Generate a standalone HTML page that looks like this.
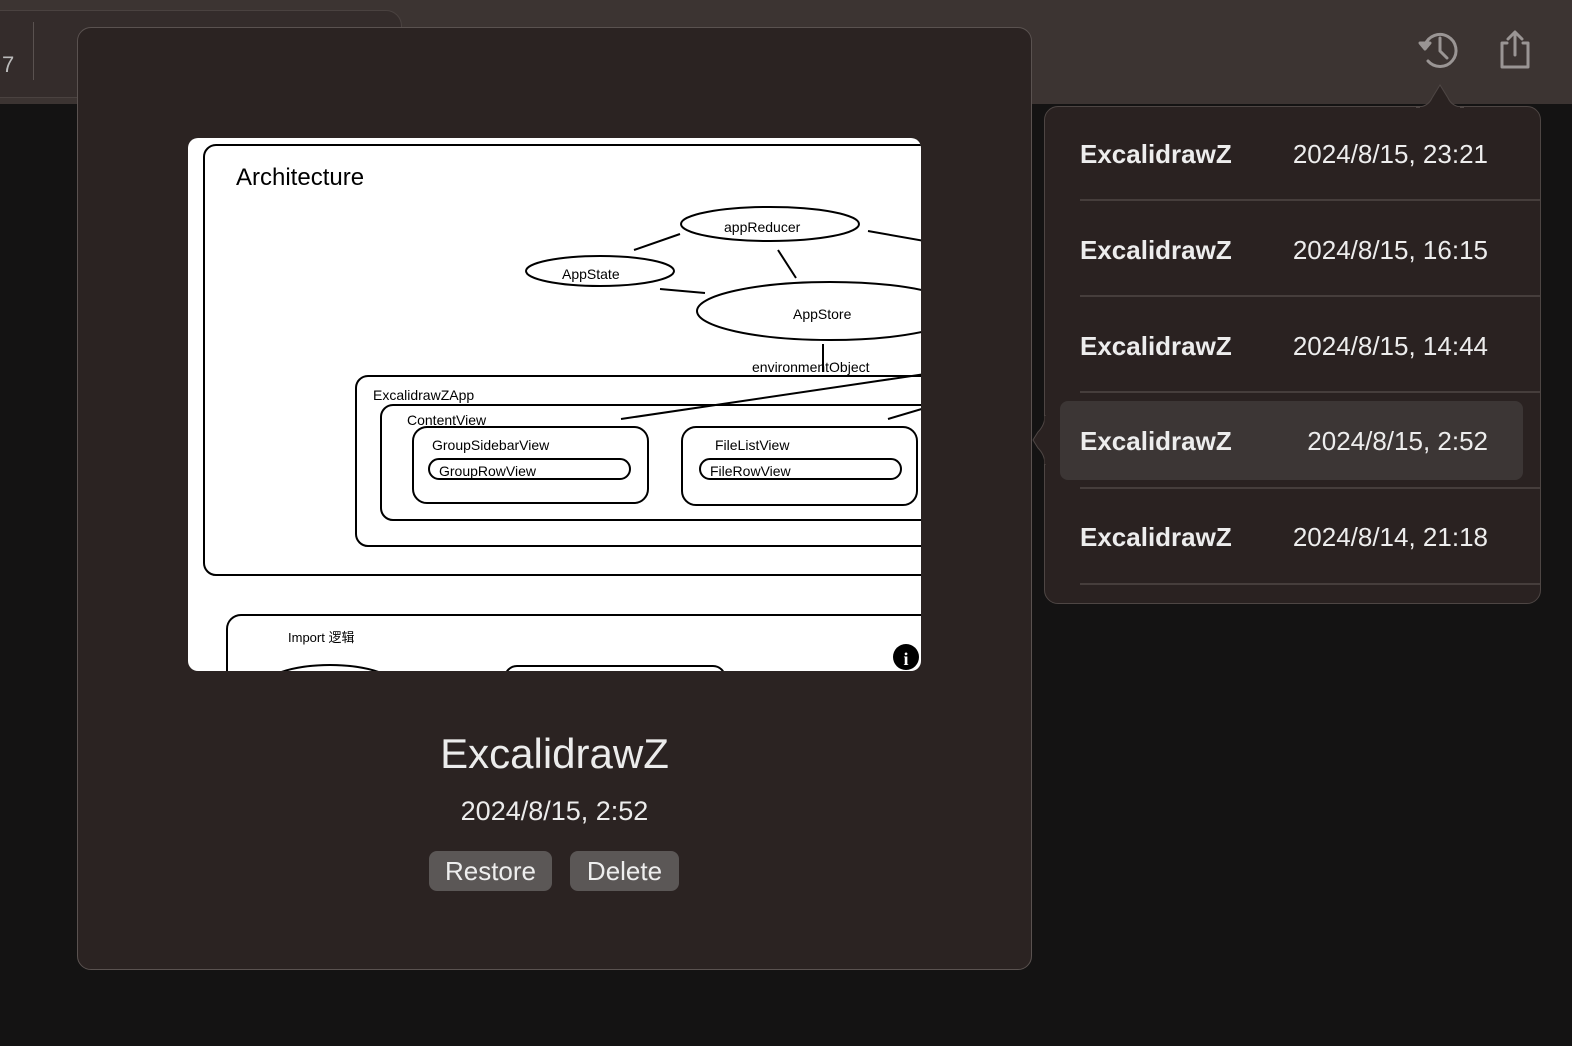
<!DOCTYPE html>
<html><head><meta charset="utf-8"><style>
body{margin:0;width:1572px;height:1046px;background:#141313;position:relative;overflow:hidden;font-family:"Liberation Sans","Noto Sans CJK SC",sans-serif;}
.top{position:absolute;left:0;top:0;width:1572px;height:104px;background:#3c3432;}
.tab{position:absolute;left:-20px;top:10px;width:420px;height:86px;background:#342c2b;border:1px solid #4a4240;border-radius:16px;}
.main{position:absolute;left:77px;top:27px;width:955px;height:943px;background:#2b2322;border:1px solid #5a5250;border-radius:14px;box-sizing:border-box;}
.pop{position:absolute;left:1044px;top:106px;width:497px;height:498px;background:#2a2221;border:1px solid #4e4644;border-radius:14px;box-sizing:border-box;}
.row{position:absolute;left:1080px;width:408px;height:40px;color:#ededed;font-size:26px;line-height:40px;}
.row b{position:absolute;left:0;}
.row span{position:absolute;right:0;}
.sep{position:absolute;left:1080px;width:460px;height:2px;background:#463e3c;}
.btn{position:absolute;top:851px;height:40px;background:#5b5756;border-radius:8px;color:#eee;font-size:26px;line-height:40px;text-align:center;}
</style></head><body>
<div class="top"></div>
<div class="tab"></div>
<div style="position:absolute;left:33px;top:22px;width:1px;height:58px;background:#5a5250"></div>
<div style="position:absolute;left:2px;top:52px;color:#bbb;font-size:22px">7</div>
<svg style="position:absolute;left:1415px;top:28px" width="120" height="46" viewBox="1415 28 120 46" fill="none" stroke="#9a9594" stroke-width="3" stroke-linecap="round" stroke-linejoin="round">
<path d="M1425 45 A16 16 0 1 1 1428 61"/><path d="M1420 43 L1425 49 L1430 43 Z" fill="#9a9594"/><path d="M1440 38 V51 L1447 58"/>
<path d="M1507 43 H1502 V67 H1528 V43 H1523"/><path d="M1515 55 V33"/><path d="M1508 39 L1515 32 L1522 39"/>
</svg>
<div class="main"></div>
<svg style="position:absolute;left:188px;top:138px;border-radius:10px" width="733" height="533" viewBox="188 138 733 533" font-family="Liberation Sans, Noto Sans CJK SC, sans-serif">
<rect x="188" y="138" width="733" height="533" fill="#fff"/>
<g fill="none" stroke="#000" stroke-width="2">
<rect x="204" y="145" width="760" height="430" rx="12"/>
<ellipse cx="770" cy="224" rx="89" ry="17"/>
<ellipse cx="600" cy="271" rx="74" ry="15"/>
<ellipse cx="830" cy="311" rx="133" ry="29"/>
<path d="M634 250 L680 234 M778 250 L796 278 M660 289 L705 293 M868 231 L930 242 M823 344 L823 372"/>
<rect x="356" y="376" width="600" height="170" rx="12"/>
<rect x="381" y="405" width="580" height="115" rx="12"/>
<path d="M621 419 L925 374 M888 419 L925 408"/>
<rect x="413" y="427" width="235" height="76" rx="14"/>
<rect x="429" y="459" width="201" height="20" rx="10"/>
<rect x="682" y="427" width="235" height="78" rx="14"/>
<rect x="700" y="459" width="201" height="20" rx="10"/>
<rect x="227" y="615" width="760" height="100" rx="14"/>
<ellipse cx="330" cy="690" rx="70" ry="25"/>
<rect x="505" y="666" width="220" height="40" rx="12"/>
</g>
<g fill="#000" font-size="14">
<text x="236" y="185" font-size="24">Architecture</text>
<text x="724" y="232">appReducer</text>
<text x="562" y="279">AppState</text>
<text x="793" y="319">AppStore</text>
<text x="752" y="372">environmentObject</text>
<text x="373" y="400">ExcalidrawZApp</text>
<text x="407" y="425">ContentView</text>
<text x="432" y="450">GroupSidebarView</text>
<text x="439" y="476">GroupRowView</text>
<text x="715" y="450">FileListView</text>
<text x="710" y="476">FileRowView</text>
<text x="288" y="642" font-size="13">Import 逻辑</text>
</g>
<circle cx="906" cy="657" r="13" fill="#000"/>
<text x="906" y="665" fill="#fff" font-size="18" font-weight="bold" text-anchor="middle" font-family="Liberation Serif, serif">i</text>
</svg>
<div style="position:absolute;left:77px;width:955px;top:730px;text-align:center;color:#ececec;font-size:42px">ExcalidrawZ</div>
<div style="position:absolute;left:77px;width:955px;top:796px;text-align:center;color:#ececec;font-size:27px">2024/8/15, 2:52</div>
<div class="btn" style="left:429px;width:123px">Restore</div>
<div class="btn" style="left:570px;width:109px">Delete</div>
<div class="pop"></div>
<svg style="position:absolute;left:1030px;top:80px" width="440" height="400" viewBox="1030 80 440 400">
<path d="M1416 107.5 Q1428 107 1432 98 L1440 85 L1448 98 Q1452 107 1464 107.5 Z" fill="#2a2221" stroke="#4e4644"/>
<path d="M1420 108.5 H1460" stroke="#2a2221" stroke-width="3"/>
<path d="M1045 415 Q1045 425 1038 432 L1033 440 L1038 448 Q1045 455 1045 465 Z" fill="#2a2221" stroke="#4e4644"/>
<path d="M1046 416 V464" stroke="#2a2221" stroke-width="3"/>
</svg>
<div style="position:absolute;left:1060px;top:401px;width:463px;height:79px;background:#3c3635;border-radius:8px"></div>
<div class="sep" style="top:199px"></div>
<div class="sep" style="top:295px"></div>
<div class="sep" style="top:391px"></div>
<div class="sep" style="top:487px"></div>
<div class="sep" style="top:583px"></div>
<div class="row" style="top:134px"><b>ExcalidrawZ</b><span>2024/8/15, 23:21</span></div>
<div class="row" style="top:230px"><b>ExcalidrawZ</b><span>2024/8/15, 16:15</span></div>
<div class="row" style="top:326px"><b>ExcalidrawZ</b><span>2024/8/15, 14:44</span></div>
<div class="row" style="top:421px"><b>ExcalidrawZ</b><span>2024/8/15, 2:52</span></div>
<div class="row" style="top:517px"><b>ExcalidrawZ</b><span>2024/8/14, 21:18</span></div>
</body></html>
